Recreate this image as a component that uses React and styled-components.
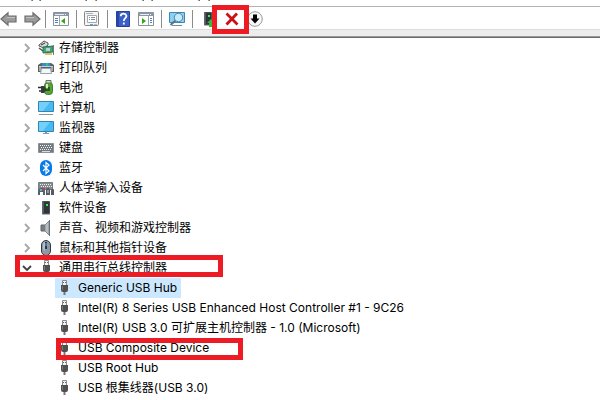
import React from "react";
import styled, { createGlobalStyle } from "styled-components";

const GlobalStyle = createGlobalStyle`
  body {
    margin: 0;
    background: #fff;
  }
`;

const Window = styled.div`
  min-height: 100vh;
  overflow: hidden;
  background: #fff;
  color: #000;
  font-family: Inter, "Noto Sans CJK SC", sans-serif;
  font-size: 12px;
`;

const MenuStrip = styled.div`
  height: 6px;
  border-bottom: 1px solid #b4b4b4;

  svg {
    display: block;
  }
`;

const Toolbar = styled.div`
  display: flex;
  align-items: center;
  height: 20px;
  padding-top: 2px;
`;

const ToolButton = styled.button`
  display: flex;
  flex: none;
  align-items: center;
  justify-content: center;
  width: ${({ $width }) => $width || 22}px;
  height: 20px;
  padding: 0;
  border: none;
  background: none;
`;

const NavGroup = styled.div`
  display: flex;
  gap: 5px;
`;

const MarkedTool = styled.span`
  position: relative;
  display: flex;
  margin: 0 1px 0 2px;
`;

const Divider = styled.span`
  flex: none;
  width: 1px;
  height: 18px;
  margin: 0 4px;
  background: #8c8c8c;
`;

const Ledge = styled.div`
  height: 6px;
  margin-bottom: 1px;
  border-top: 1px solid #dcdcdc;
  border-bottom: 1px solid #9a9a9a;
  background: #ededed;
  box-shadow: 0 1px 0 #696969;
`;

const Mark = styled.span`
  position: absolute;
  z-index: 1;
  inset: ${({ $inset }) => $inset};
  border: 5px solid #ed1c24;
  pointer-events: none;
`;

const Tree = styled.ul`
  margin: 0;
  padding: 0 0 0 ${({ $nested }) => ($nested ? "34px" : "21px")};
  list-style: none;
`;

const Row = styled.div`
  position: relative;
  display: flex;
  align-items: center;
  width: max-content;
  height: 20px;
  padding-right: 4px;
  background: ${({ $selected }) => ($selected ? "#cce8ff" : "none")};
`;

const Toggle = styled.button`
  display: flex;
  align-items: center;
  justify-content: center;
  width: 12px;
  height: 20px;
  margin-right: 4px;
  padding: 0;
  border: none;
  background: none;
`;

const IconSlot = styled.span`
  display: flex;
  width: 18px;
  height: 18px;
  margin-right: ${({ $nested }) => ($nested ? "5px" : "4px")};
  justify-content: center;
  align-items: center;
`;

const Label = styled.span`
  line-height: 20px;
  white-space: nowrap;
`;

const Svg = ({ children, w = 16, h = 16 }) => (
  <svg width={w} height={h} viewBox={`0 0 ${w} ${h}`} fill="none" aria-hidden="true">
    {children}
  </svg>
);

// lower edges of the menu captions that are scrolled out above the toolbar
const MenuEdges = () => (
  <Svg w={240} h={2}>
    {[31, 39, 85, 95, 142, 151, 198, 208].map((x) => (
      <React.Fragment key={x}>
        <path d={`M${x} 0h1v1h-1z`} fill="#d09a58" />
        <path d={`M${x + 1} 0h1v1h-1z`} fill="#2f7fc4" />
      </React.Fragment>
    ))}
  </Svg>
);

const Arrow = ({ flip }) => (
  <Svg w={18} h={16}>
    <path
      d="M1 8 8 1.8V5H16V11H8V14.2Z"
      transform={flip ? "translate(18 0) scale(-1 1)" : undefined}
      fill="#9b9b9b"
      stroke="#6c6c6c"
      strokeWidth="1.2"
    />
    <path d={flip ? "M3 6.5H11" : "M7 6.5H15"} stroke="#c2c2c2" />
  </Svg>
);

const PaneIcon = ({ flip }) => (
  <Svg>
    <path d="M.5 1.5H15.5V14.5H.5Z" fill="#fff" stroke="#8b929c" />
    <path d="M1 2H15V5H1Z" fill="#8997a8" />
    <path d="M2 3.5H11" stroke="#e8edf2" />
    <path d="M12 3.5H14" stroke="#fff" strokeDasharray="1 1" />
    <path d={flip ? "M10.5 5V14" : "M6.5 5V14"} stroke="#9da4ac" />
    <path
      d={flip ? "M12 7.5H14M12 9.5H14M12 11.5H14" : "M2 7.5H5M2 9.5H5M2 11.5H5"}
      stroke="#4b80b6"
    />
    <path d={flip ? "M4 7 8 10 4 13Z" : "M12 7 8 10 12 13Z"} fill="#30a814" />
  </Svg>
);

const PropertiesIcon = () => (
  <Svg>
    <rect x=".5" y=".5" width="14" height="14" rx="1" fill="#f5f5f5" stroke="#858585" />
    <path d="M3.5 4.5H12.5V11.5H3.5Z" fill="#fff" stroke="#a3a9ae" />
    <path d="M2 2.5H9" stroke="#a8b3bd" />
    <path d="M5 6.5H6M7 6.5H11M5 8.5H6M7 8.5H11" stroke="#7b8d9c" />
    <path d="M6 13.5H9" stroke="#28b5e8" />
    <path d="M10 13.5H13" stroke="#b5bcc2" />
  </Svg>
);

const HelpIcon = () => (
  <Svg w={14}>
    <path d="M.5.5H13.5V15.5H.5Z" fill="#3b5fc9" stroke="#27419b" />
    <path d="M1 1H3V15H1Z" fill="#2a47a3" />
    <path
      d="M4.7 5.2C4.8 1.8 10.5 2 10.4 5.2C10.3 7.2 7.8 7.3 7.8 10M7.8 11.5V13.5"
      stroke="#fff"
      strokeWidth="1.8"
    />
  </Svg>
);

const ScanIcon = () => (
  <Svg w={18}>
    <path d="M1.5 1.5H16.5V11.5H1.5Z" fill="#8bd0f3" stroke="#3b87b8" />
    <path d="M4 14.5H14" stroke="#798b98" />
    <path d="M7.5 9.5 2.5 14" stroke="#5c7585" strokeWidth="2" />
    <circle cx="10.5" cy="6.5" r="4.2" fill="#c4eafb" stroke="#56859e" />
  </Svg>
);

const TowerIcon = ({ update }) => (
  <Svg>
    <path d="M4.5 1.5H11.5V13.5H4.5Z" fill="#30343a" stroke="#4b4f54" />
    <path d="M5 2V13" stroke="#78808a" />
    <path d="M8 4H10V6H8Z" fill="#37f33d" />
    <path d="M4 14.5H12" stroke="#b6b6b6" />
    {update && <path d="M7 12 11 8 15 12H13V16H9V12Z" fill="#39b63b" />}
  </Svg>
);

const CrossIcon = () => (
  <Svg>
    <path d="M2.5 2.5 13.5 13.5M13 2.5 2.5 13.5" stroke="#ca1114" strokeWidth="2.8" />
  </Svg>
);

const DownIcon = () => (
  <Svg>
    <circle cx="8" cy="8" r="7.3" fill="#f7f7f7" stroke="#9a9a9a" />
    <path d="M6 3.5H10V7.5H12.5L8 12.5 3.5 7.5H6Z" fill="#000" />
  </Svg>
);

const StorageIcon = () => (
  <Svg>
    <path d="M1 5 6 1 10 3V5L6 8 1 6Z" fill="#d9d9d9" stroke="#555" />
    <path d="M3 5 7 3" stroke="#333" />
    <path d="M1 8 5 11" stroke="#555" strokeWidth="1.5" />
    <path d="M5 7 15 6V12L5 13Z" fill="#44a678" stroke="#287052" />
    <path d="M8 8H12V11H8Z" fill="#b9d2d9" />
    <path d="M7 14H14" stroke="#d2ae35" strokeWidth="1.5" />
    <path d="M15.5 5V15" stroke="#777" />
  </Svg>
);

const PrinterIcon = () => (
  <Svg>
    <path d="M0 5 3 3H13L16 5V12H0Z" fill="#5b6065" />
    <path d="M4 3H12V6H4Z" fill="#318fd0" />
    <path d="M8 3H10V6H8Z" fill="#42b78b" />
    <path d="M1 6.5H15" stroke="#c8cdd1" />
    <path d="M1 7H3V11H1ZM13 7H15V11H13Z" fill="#a4a9ad" />
    <path d="M3.5 8.5H12.5L13.5 13.5H2.5Z" fill="#f4f7f9" stroke="#9ba4aa" />
  </Svg>
);

const BatteryIcon = () => (
  <Svg>
    <rect x="6.5" y="2.5" width="8" height="12" rx="3" fill="#50a832" stroke="#447b3a" />
    <path d="M8 .5H13V3H8Z" fill="#d2d9d1" stroke="#667064" />
    <path d="M9 4V8" stroke="#d1f3b7" strokeWidth="2" />
    <path d="M0 7.5H4M1 11H4" stroke="#292c2d" strokeWidth="1.5" />
    <path d="M3 6H6Q10 9 6 13H3Z" fill="#373b3c" />
    <path d="M7 10H11V7" stroke="#303334" strokeWidth="1.5" />
  </Svg>
);

const MonitorIcon = ({ desktop }) => (
  <Svg>
    <path d="M.5 1.5H15.5V11.5H.5Z" fill="#49b9f1" stroke="#3184b0" />
    <path d="M1 2H12L5 11H1Z" fill="#73d0fa" />
    {!desktop && <path d="M7 12H9V14H7Z" fill="#7799ad" />}
    <path d={desktop ? "M1 14.5H15" : "M5 13.5H11"} stroke="#789aae" />
  </Svg>
);

const KeyboardIcon = () => (
  <Svg>
    <path d="M.5 3.5H15.5V12.5H.5Z" fill="#747b80" stroke="#8d9296" />
    <path
      d="M2 5.5H14M3 7.5H14M2 9.5H14"
      stroke="#f3f3f3"
      strokeDasharray="1 1"
    />
    <path d="M4 11.5H12" stroke="#d8dddf" />
  </Svg>
);

const BluetoothIcon = () => (
  <Svg>
    <rect x="2" width="12" height="16" rx="6" fill="#0879e8" />
    <path d="M5 5 11 11 8 13.5V2.5L11 5 5 11" stroke="#fff" strokeWidth="1.2" />
  </Svg>
);

const HidIcon = () => (
  <Svg>
    <path d="M.5 2.5H14.5V9.5H.5Z" fill="#858a8d" stroke="#777c80" />
    <path d="M2 4.5H14M3 6.5H14" stroke="#eee" strokeDasharray="1 1" />
    <path d="M0 15V10Q3 6 7 9V15H5V12H2V15Z" fill="#4d6576" />
    <path d="M8 15V9Q11 6 12 10V15ZM13 15V10Q15 7 16 10V15Z" fill="#555b60" />
    <path d="M2 10H4" stroke="#b6e4f8" />
    <path d="M6 8V10" stroke="#dc3935" strokeWidth="2" />
    <path d="M10 10V13" stroke="#a7def6" />
  </Svg>
);

const SpeakerIcon = () => (
  <Svg>
    <path d="M3 5H7V11H3Z" fill="#777f85" stroke="#60676c" />
    <path d="M7 5 11 1V15L7 11Z" fill="#b9c0c4" stroke="#858d92" />
    <path d="M11.5 0V16" stroke="#687177" />
  </Svg>
);

const MouseIcon = () => (
  <Svg>
    <rect x="3.5" y=".5" width="9" height="15" rx="4.5" fill="#8c98a4" stroke="#343a40" />
    <path d="M5 5Q5 2 7 2V11Q5 10 5 8Z" fill="#b4bfc9" />
    <path d="M8 2V9" stroke="#263b50" strokeWidth="2" />
    <path d="M8 3V6" stroke="#73b5e0" />
  </Svg>
);

const UsbIcon = () => (
  <Svg>
    <path d="M6.5.5H10.5V5.5H6.5Z" fill="#f3f3f3" stroke="#8b8b8b" />
    <path d="M7 2.5H8M9 2.5H10" stroke="#666" />
    <path d="M5 5H12V10Q12 12 10 12H7Q5 12 5 10Z" fill="#505050" />
    <path d="M6.5 6V10" stroke="#7a7a7a" />
    <path d="M8.5 12V15" stroke="#777" strokeWidth="2" />
  </Svg>
);

const Chevron = ({ open }) => (
  <Svg w={12} h={12}>
    <path
      d={open ? "M2 4 6 8 10 4" : "M4 2 8 6 4 10"}
      stroke={open ? "#404040" : "#a6a6a6"}
      strokeWidth="1.8"
    />
  </Svg>
);

const categories = [
  { name: "存储控制器", icon: <StorageIcon /> },
  { name: "打印队列", icon: <PrinterIcon /> },
  { name: "电池", icon: <BatteryIcon /> },
  { name: "计算机", icon: <MonitorIcon desktop /> },
  { name: "监视器", icon: <MonitorIcon /> },
  { name: "键盘", icon: <KeyboardIcon /> },
  { name: "蓝牙", icon: <BluetoothIcon /> },
  { name: "人体学输入设备", icon: <HidIcon /> },
  { name: "软件设备", icon: <TowerIcon /> },
  { name: "声音、视频和游戏控制器", icon: <SpeakerIcon /> },
  { name: "鼠标和其他指针设备", icon: <MouseIcon /> },
  {
    name: "通用串行总线控制器",
    icon: <UsbIcon />,
    mark: "-3px -52px 1px -6px",
    devices: [
      { name: "Generic USB Hub", selected: true },
      { name: "Intel(R) 8 Series USB Enhanced Host Controller #1 - 9C26" },
      { name: "Intel(R) USB 3.0 可扩展主机控制器 - 1.0 (Microsoft)" },
      { name: "USB Composite Device", mark: "0 -30px -2px 1px" },
      { name: "USB Root Hub" },
      { name: "USB 根集线器(USB 3.0)" },
    ],
  },
];

const App = () => (
  <>
    <GlobalStyle />
    <Window>
      <MenuStrip><MenuEdges /></MenuStrip>
      <Toolbar>
        <NavGroup>
          <ToolButton $width={18} aria-label="后退"><Arrow /></ToolButton>
          <ToolButton $width={18} aria-label="前进"><Arrow flip /></ToolButton>
        </NavGroup>
        <Divider />
        <ToolButton aria-label="显示控制台树"><PaneIcon /></ToolButton>
        <Divider />
        <ToolButton aria-label="属性"><PropertiesIcon /></ToolButton>
        <Divider />
        <ToolButton aria-label="帮助"><HelpIcon /></ToolButton>
        <ToolButton $width={23} aria-label="操作窗格"><PaneIcon flip /></ToolButton>
        <Divider />
        <ToolButton aria-label="扫描检测硬件改动"><ScanIcon /></ToolButton>
        <Divider />
        <ToolButton aria-label="更新驱动程序"><TowerIcon update /></ToolButton>
        <MarkedTool>
          <ToolButton aria-label="卸载设备"><CrossIcon /></ToolButton>
          <Mark $inset="-4px -6px -5px -9px" />
        </MarkedTool>
        <ToolButton aria-label="禁用设备"><DownIcon /></ToolButton>
      </Toolbar>
      <Ledge />
      <Tree>
        {categories.map(({ name, icon, mark, devices }) => (
          <li key={name}>
            <Row>
              <Toggle aria-label={name} aria-expanded={Boolean(devices)}>
                <Chevron open={Boolean(devices)} />
              </Toggle>
              <IconSlot>{icon}</IconSlot>
              <Label>{name}</Label>
              {mark && <Mark $inset={mark} />}
            </Row>
            {devices && (
              <Tree $nested>
                {devices.map((device) => (
                  <li key={device.name}>
                    <Row $selected={device.selected}>
                      <IconSlot $nested><UsbIcon /></IconSlot>
                      <Label>{device.name}</Label>
                      {device.mark && <Mark $inset={device.mark} />}
                    </Row>
                  </li>
                ))}
              </Tree>
            )}
          </li>
        ))}
      </Tree>
    </Window>
  </>
);

export default App;
